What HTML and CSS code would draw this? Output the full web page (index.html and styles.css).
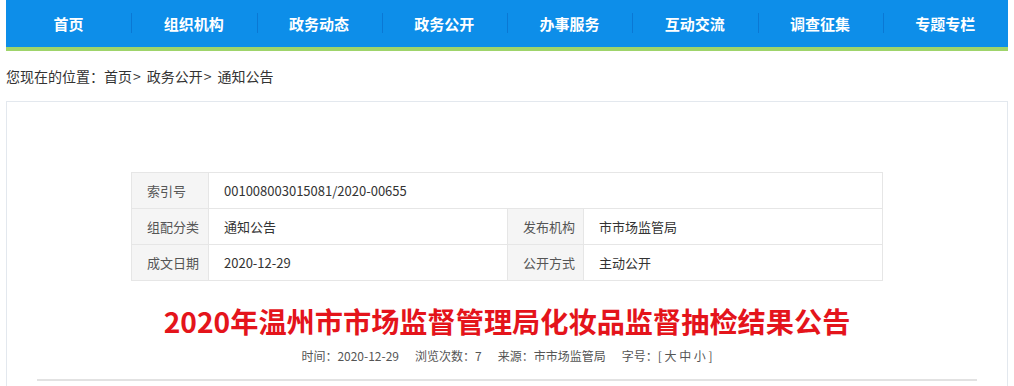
FILE: index.html
```html
<!DOCTYPE html>
<html lang="zh-CN">
<head>
    <meta charset="UTF-8">
    <title>2020年温州市市场监督管理局化妆品监督抽检结果公告</title>
    <link rel="stylesheet" href="styles.css">
</head>
<body>
    <div class="page">
        <ul class="nav">
            <li><a href="#">首页</a></li>
            <li><a href="#">组织机构</a></li>
            <li><a href="#">政务动态</a></li>
            <li><a href="#">政务公开</a></li>
            <li><a href="#">办事服务</a></li>
            <li><a href="#">互动交流</a></li>
            <li><a href="#">调查征集</a></li>
            <li><a href="#">专题专栏</a></li>
        </ul>

        <div class="crumb">您现在的位置：<a href="#">首页</a><span class="sep">&gt;</span><a href="#">政务公开</a><span class="sep">&gt;</span><a href="#">通知公告</a></div>

        <div class="article">
            <table class="meta-table">
                <colgroup>
                    <col class="col-label">
                    <col class="col-value">
                    <col class="col-label2">
                    <col class="col-value">
                </colgroup>
                <tr>
                    <th>索引号</th>
                    <td colspan="3">001008003015081/2020-00655</td>
                </tr>
                <tr>
                    <th>组配分类</th>
                    <td>通知公告</td>
                    <th>发布机构</th>
                    <td>市市场监管局</td>
                </tr>
                <tr>
                    <th>成文日期</th>
                    <td>2020-12-29</td>
                    <th>公开方式</th>
                    <td>主动公开</td>
                </tr>
            </table>

            <h1 class="title">2020年温州市市场监督管理局化妆品监督抽检结果公告</h1>
            <div class="info">
                <span>时间：2020-12-29</span>
                <span>浏览次数：7</span>
                <span>来源：市市场监管局</span>
                <span>字号：[ <a href="#">大</a> <a href="#">中</a> <a href="#">小</a> ]</span>
            </div>
        </div>
    </div>
</body>
</html>
```

FILE: styles.css
```css
body {
    margin: 0;
    font-family: "Noto Sans CJK SC", "Noto Sans", sans-serif;
    color: #333;
    background: #fff;
}

a {
    color: inherit;
    text-decoration: none;
}

.page {
    padding: 0 6px;
}

/* top navigation */
.nav {
    display: flex;
    list-style: none;
    margin: 0;
    padding: 0;
    height: 47px;
    background-color: #0d8ee9;
    border-bottom: 4px solid #9fd46a;
}

.nav li {
    flex: 1;
    display: flex;
    align-items: center;
    justify-content: center;
    position: relative;
}

.nav li + li::before {
    content: "";
    position: absolute;
    left: 0;
    top: 13px;
    height: 20px;
    width: 1px;
    background-color: #0a78d4;
}

.nav a {
    color: #fff;
    font-size: 15px;
    font-weight: bold;
    line-height: 20px;
}

.crumb {
    font-size: 14px;
    line-height: 50px;
    color: #333;
}

.crumb .sep {
    margin: 0 6px 0 1px;
}

/* article box */
.article {
    border: 1px solid #e3e8ee;
    padding: 70px 30px 0;
    min-height: 300px;
}

.meta-table {
    width: 751px;
    margin: 0 auto;
    border-collapse: collapse;
    table-layout: fixed;
    font-size: 13px;
}

.col-label {
    width: 77px;
}

.col-label2 {
    width: 76px;
}

.col-value {
    width: 299px;
}

.meta-table th,
.meta-table td {
    border: 1px solid #e6e6e6;
    height: 35px;
    padding: 0 0 0 15px;
    text-align: left;
    font-weight: normal;
    white-space: nowrap;
}

.meta-table th {
    background-color: #f5f5f5;
    color: #555;
}

.meta-table td {
    color: #333;
}

.title {
    margin: 20px 0 0;
    font-size: 28.2px;
    line-height: 40px;
    font-weight: bold;
    color: #e4141b;
    text-align: center;
}

.info {
    margin-top: 3px;
    padding-bottom: 11px;
    border-bottom: 2px solid #e2e2e2;
    display: flex;
    justify-content: center;
    gap: 16px;
    font-size: 12px;
    line-height: 24px;
    color: #555;
}
```
